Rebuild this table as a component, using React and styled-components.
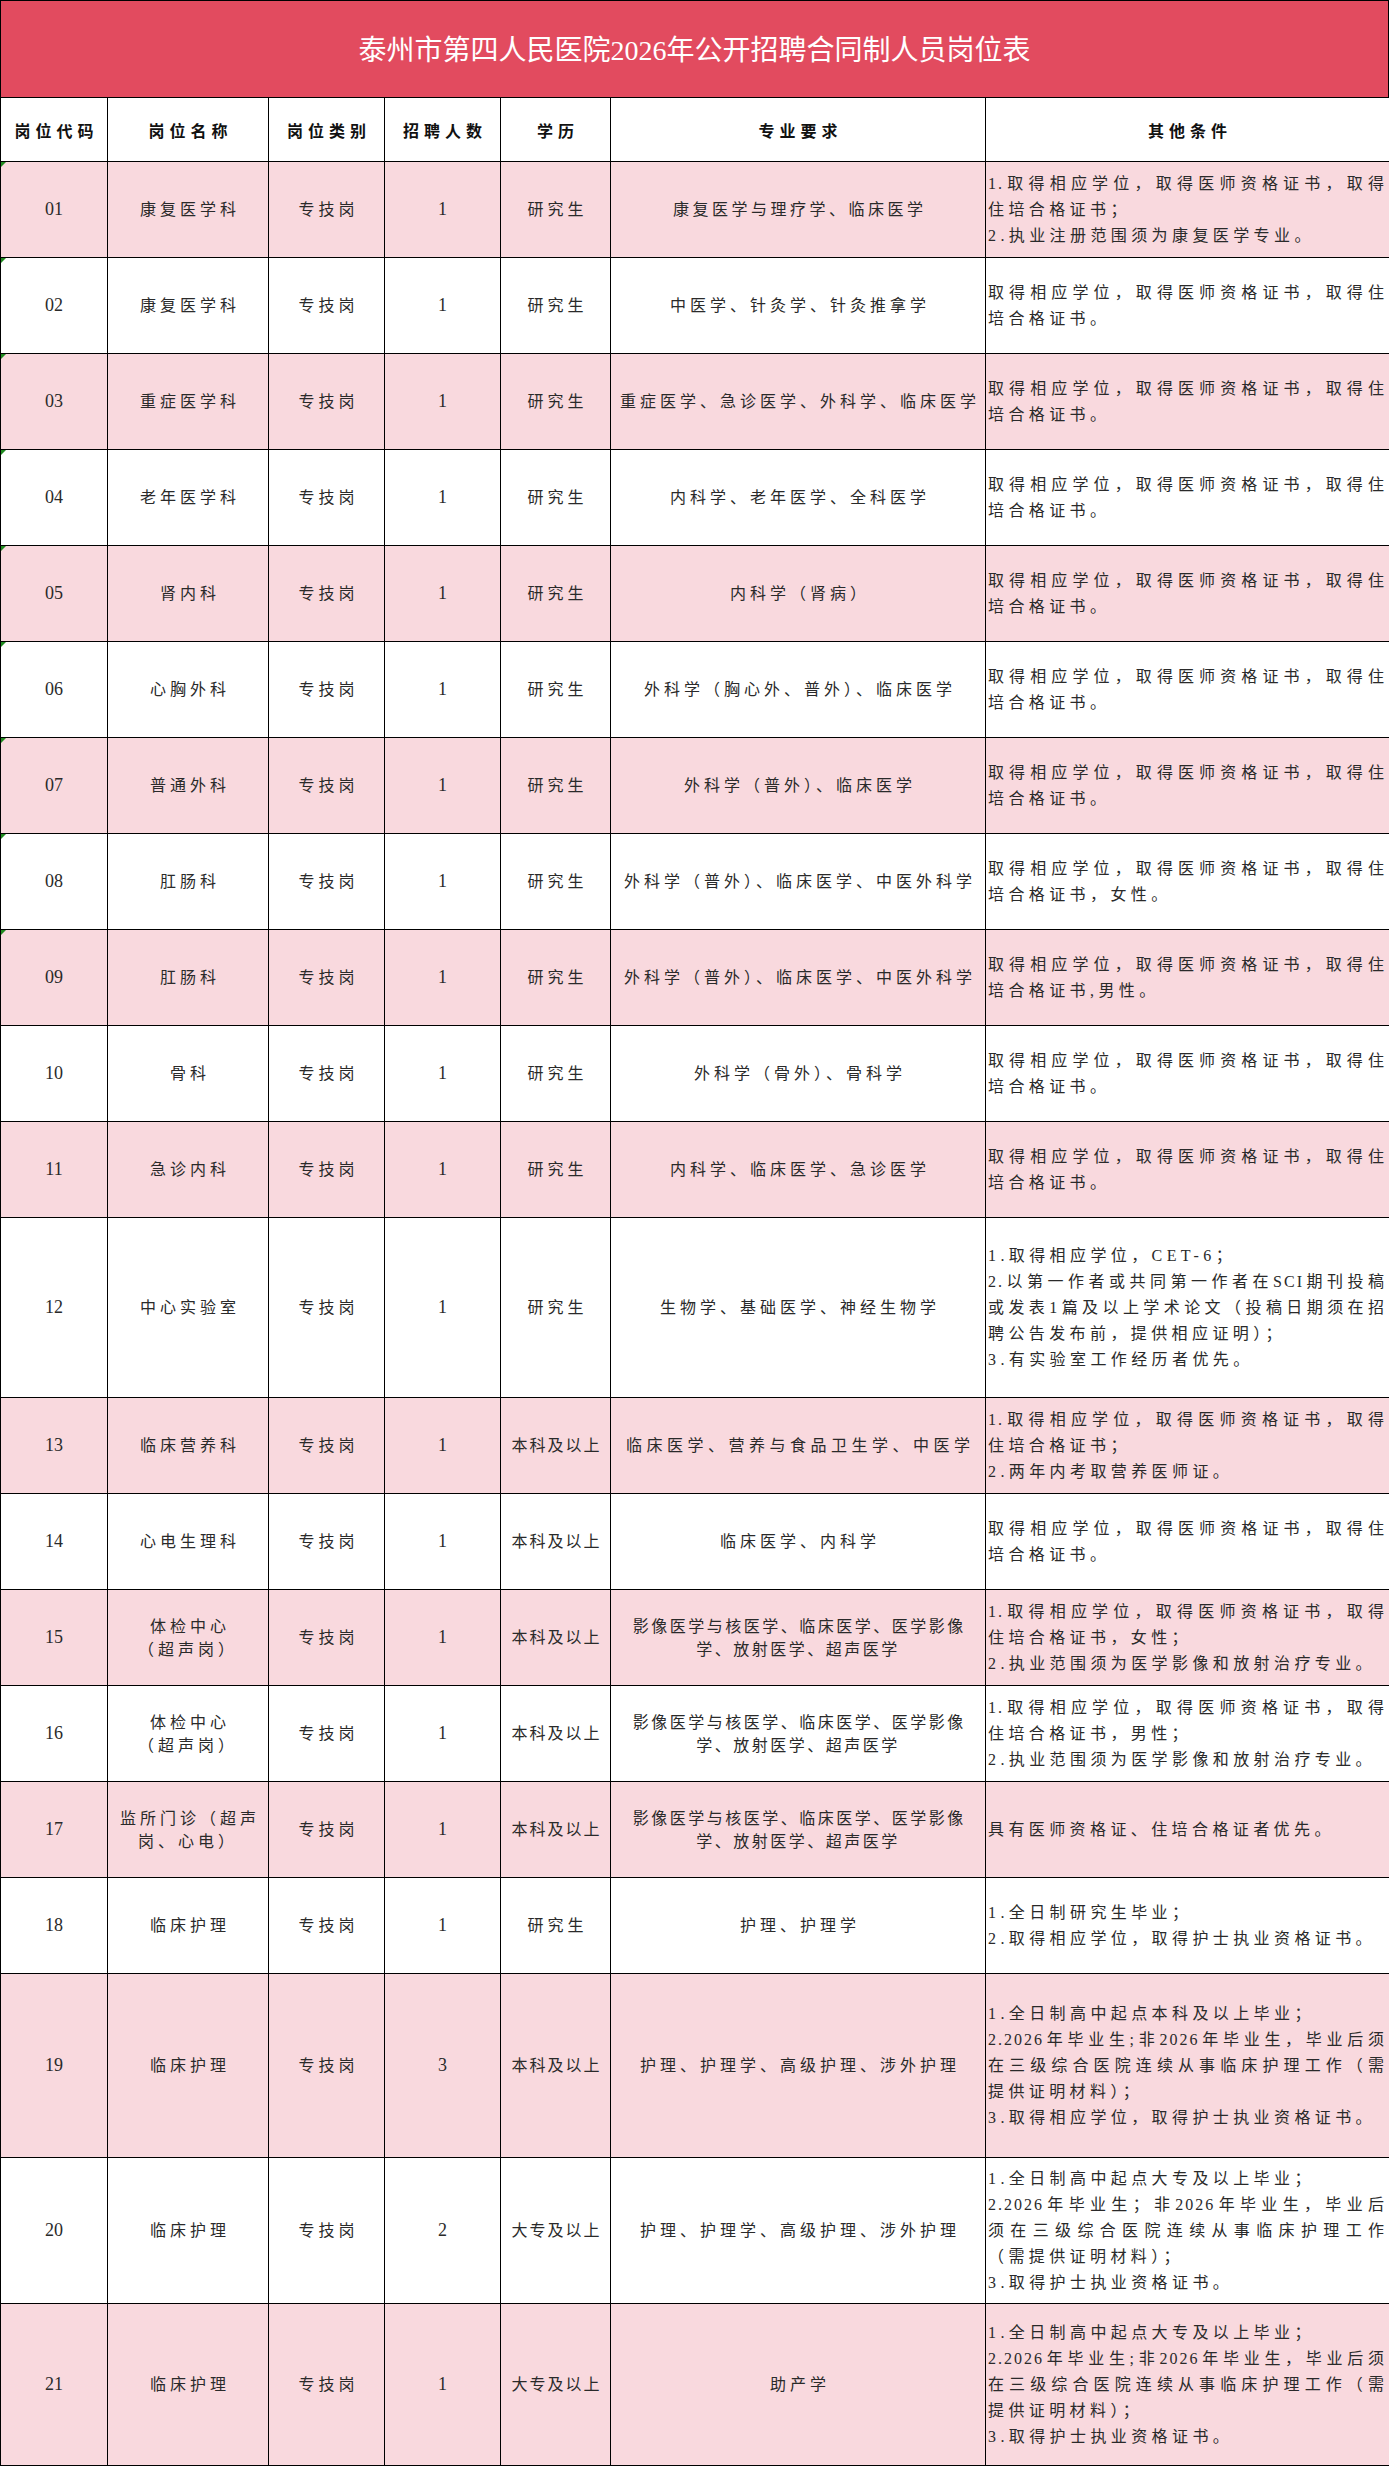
import React from 'react'
import styled, { createGlobalStyle } from 'styled-components'

const GlobalStyle = createGlobalStyle`
  html, body {
    margin: 0;
    padding: 0;
    background: #fff;
  }
  body {
    font-family: "Liberation Serif", "Noto Sans CJK SC", serif;
    color: #222;
  }
`

const Sheet = styled.div`
  width: 1389px;
`

const TitleBar = styled.div`
  box-sizing: border-box;
  height: 97px;
  background: #e24b5f;
  border: 1px solid #000;
  border-bottom: none;
  display: flex;
  align-items: center;
  justify-content: center;
  color: #fff;
  font-size: 28px;
  font-family: "Liberation Serif", "Noto Sans CJK SC", serif;
  padding-bottom: 2px;
`

const Grid = styled.table`
  width: 1389px;
  border-collapse: collapse;
  table-layout: fixed;
`

const HeadCell = styled.th`
  border: 1px solid #000;
  height: 63px;
  padding: 0;
  font-size: 16px;
  font-weight: 700;
  letter-spacing: 5px;
  text-indent: 5px;
  color: #111;
  font-family: "Liberation Serif", "Noto Sans CJK SC", serif;
`

const Row = styled.tr`
  background: ${p => (p.$pink ? '#f9d9de' : '#fff')};
  height: ${p => p.$h}px;
`

const Cell = styled.td`
  position: relative;
  border: 1px solid #000;
  padding: 0;
  text-align: center;
  text-indent: ${p => p.$spacing ?? 4}px;
  vertical-align: middle;
  font-size: ${p => (p.$num ? 18 : 16)}px;
  line-height: 23px;
  letter-spacing: ${p => p.$spacing ?? 4}px;
  color: #2a2a2a;
  white-space: nowrap;

  &::before {
    content: '';
    display: ${p => (p.$flag ? 'block' : 'none')};
    position: absolute;
    left: 0;
    top: 0;
    border-top: 5px solid #1f8a1f;
    border-right: 5px solid transparent;
  }
`

const NoteCell = styled.td`
  border: 1px solid #000;
  padding: 0 3px 0 2px;
  vertical-align: middle;
  font-size: 16px;
  line-height: 26px;
  color: #2a2a2a;
`

const NoteLine = styled.span`
  display: block;
  white-space: normal;
  letter-spacing: ${p => (p.$fill ? 2 : 4.4)}px;
  text-align: ${p => (p.$fill ? 'justify' : 'left')};
  text-align-last: ${p => (p.$fill ? 'justify' : 'left')};
`

const Lines = ({ items }) =>
  items.map((t, i) => (
    <React.Fragment key={i}>
      {i > 0 && <br />}
      {t}
    </React.Fragment>
  ))

// a line is stretched to the cell width when the text simply wrapped after it,
// i.e. the next line is not the start of a new numbered point
const Notes = ({ items }) =>
  items.map((t, i) => {
    const next = items[i + 1]
    const fill = next !== undefined && !/^\d\./.test(next)
    return (
      <NoteLine key={i} $fill={fill}>
        {t}
      </NoteLine>
    )
  })

const STD = ['取得相应学位，取得医师资格证书，取得住', '培合格证书。']
const IMG = ['影像医学与核医学、临床医学、医学影像', '学、放射医学、超声医学']

const rows = [
  { code: '01', name: ['康复医学科'], num: 1, edu: '研究生', major: ['康复医学与理疗学、临床医学'], ms: 3.5,
    other: ['1.取得相应学位，取得医师资格证书，取得', '住培合格证书；', '2.执业注册范围须为康复医学专业。'] },
  { code: '02', name: ['康复医学科'], num: 1, edu: '研究生', major: ['中医学、针灸学、针灸推拿学'], other: STD },
  { code: '03', name: ['重症医学科'], num: 1, edu: '研究生', major: ['重症医学、急诊医学、外科学、临床医学'], other: STD },
  { code: '04', name: ['老年医学科'], num: 1, edu: '研究生', major: ['内科学、老年医学、全科医学'], other: STD },
  { code: '05', name: ['肾内科'], num: 1, edu: '研究生', major: ['内科学（肾病）'], other: STD },
  { code: '06', name: ['心胸外科'], num: 1, edu: '研究生', major: ['外科学（胸心外、普外）、临床医学'], other: STD },
  { code: '07', name: ['普通外科'], num: 1, edu: '研究生', major: ['外科学（普外）、临床医学'], other: STD },
  { code: '08', name: ['肛肠科'], num: 1, edu: '研究生', major: ['外科学（普外）、临床医学、中医外科学'],
    other: ['取得相应学位，取得医师资格证书，取得住', '培合格证书，女性。'] },
  { code: '09', name: ['肛肠科'], num: 1, edu: '研究生', major: ['外科学（普外）、临床医学、中医外科学'],
    other: ['取得相应学位，取得医师资格证书，取得住', '培合格证书,男性。'] },
  { code: '10', name: ['骨科'], num: 1, edu: '研究生', major: ['外科学（骨外）、骨科学'], other: STD },
  { code: '11', name: ['急诊内科'], num: 1, edu: '研究生', major: ['内科学、临床医学、急诊医学'], other: STD },
  { code: '12', name: ['中心实验室'], num: 1, edu: '研究生', major: ['生物学、基础医学、神经生物学'], h: 180,
    other: ['1.取得相应学位，CET-6；', '2.以第一作者或共同第一作者在SCI期刊投稿', '或发表1篇及以上学术论文（投稿日期须在招',
      '聘公告发布前，提供相应证明）；', '3.有实验室工作经历者优先。'] },
  { code: '13', name: ['临床营养科'], num: 1, edu: '本科及以上', major: ['临床医学、营养与食品卫生学、中医学'], ms: 4.5,
    other: ['1.取得相应学位，取得医师资格证书，取得', '住培合格证书；', '2.两年内考取营养医师证。'] },
  { code: '14', name: ['心电生理科'], num: 1, edu: '本科及以上', major: ['临床医学、内科学'], other: STD },
  { code: '15', name: ['体检中心', '（超声岗）'], num: 1, edu: '本科及以上', major: IMG, ms: 2.5,
    other: ['1.取得相应学位，取得医师资格证书，取得', '住培合格证书，女性；', '2.执业范围须为医学影像和放射治疗专业。'] },
  { code: '16', name: ['体检中心', '（超声岗）'], num: 1, edu: '本科及以上', major: IMG, ms: 2.5,
    other: ['1.取得相应学位，取得医师资格证书，取得', '住培合格证书，男性；', '2.执业范围须为医学影像和放射治疗专业。'] },
  { code: '17', name: ['监所门诊（超声', '岗、心电）'], num: 1, edu: '本科及以上', major: IMG, ms: 2.5,
    other: ['具有医师资格证、住培合格证者优先。'] },
  { code: '18', name: ['临床护理'], num: 1, edu: '研究生', major: ['护理、护理学'],
    other: ['1.全日制研究生毕业；', '2.取得相应学位，取得护士执业资格证书。'] },
  { code: '19', name: ['临床护理'], num: 3, edu: '本科及以上', major: ['护理、护理学、高级护理、涉外护理'], h: 184,
    other: ['1.全日制高中起点本科及以上毕业；', '2.2026年毕业生;非2026年毕业生，毕业后须', '在三级综合医院连续从事临床护理工作（需',
      '提供证明材料）；', '3.取得相应学位，取得护士执业资格证书。'] },
  { code: '20', name: ['临床护理'], num: 2, edu: '大专及以上', major: ['护理、护理学、高级护理、涉外护理'], h: 146,
    other: ['1.全日制高中起点大专及以上毕业；', '2.2026年毕业生；非2026年毕业生，毕业后', '须在三级综合医院连续从事临床护理工作',
      '（需提供证明材料）；', '3.取得护士执业资格证书。'] },
  { code: '21', name: ['临床护理'], num: 1, edu: '大专及以上', major: ['助产学'], h: 162,
    other: ['1.全日制高中起点大专及以上毕业；', '2.2026年毕业生;非2026年毕业生，毕业后须', '在三级综合医院连续从事临床护理工作（需',
      '提供证明材料）；', '3.取得护士执业资格证书。'] },
]

const COLS = [107, 161, 116, 116, 110, 375, 404]
const HEADS = ['岗位代码', '岗位名称', '岗位类别', '招聘人数', '学历', '专业要求', '其他条件']

export default function App() {
  return (
    <Sheet>
      <GlobalStyle />
      <TitleBar>泰州市第四人民医院2026年公开招聘合同制人员岗位表</TitleBar>
      <Grid>
        <colgroup>
          {COLS.map((w, i) => (
            <col key={i} style={{ width: w }} />
          ))}
        </colgroup>
        <thead>
          <tr>
            {HEADS.map(h => (
              <HeadCell key={h}>{h}</HeadCell>
            ))}
          </tr>
        </thead>
        <tbody>
          {rows.map((r, i) => (
            <Row key={r.code} $pink={i % 2 === 0} $h={r.h || 96}>
              <Cell $num $flag={r.code.startsWith('0')} $spacing={0}>{r.code}</Cell>
              <Cell><Lines items={r.name} /></Cell>
              <Cell>专技岗</Cell>
              <Cell $num $spacing={0}>{r.num}</Cell>
              <Cell $spacing={r.edu === '研究生' ? 4 : 2}>{r.edu}</Cell>
              <Cell $spacing={r.ms ?? 4}><Lines items={r.major} /></Cell>
              <NoteCell><Notes items={r.other} /></NoteCell>
            </Row>
          ))}
        </tbody>
      </Grid>
    </Sheet>
  )
}
